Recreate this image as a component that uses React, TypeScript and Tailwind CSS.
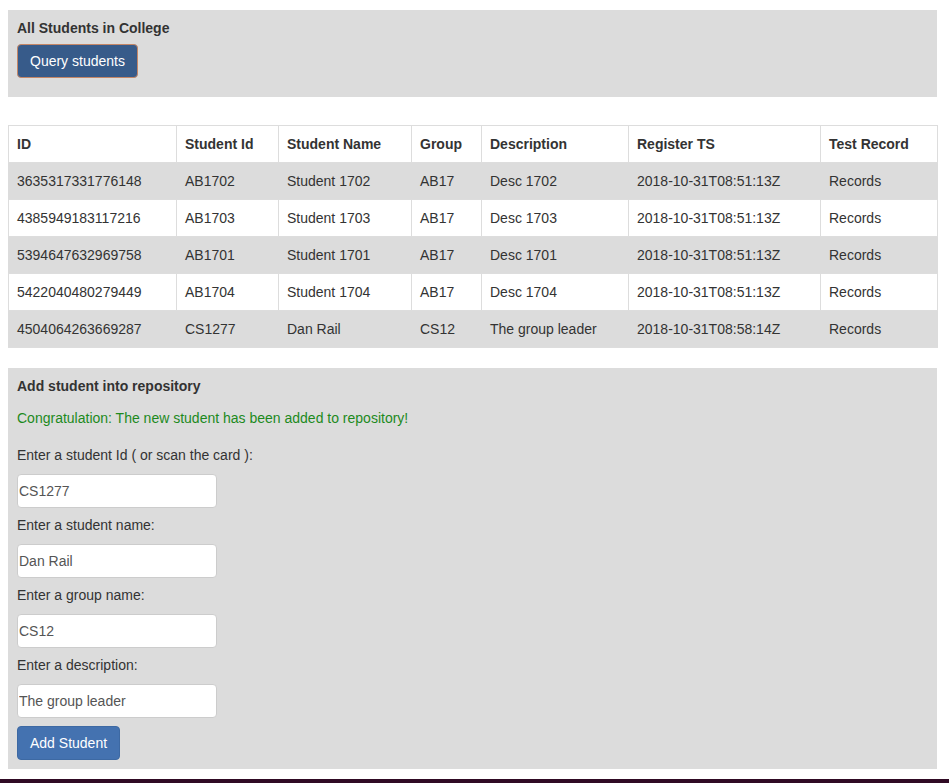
import React, { useState } from 'react';

type Student = {
  id: string;
  studentId: string;
  name: string;
  group: string;
  description: string;
  registerTs: string;
};

const students: Student[] = [
  { id: '3635317331776148', studentId: 'AB1702', name: 'Student 1702', group: 'AB17', description: 'Desc 1702', registerTs: '2018-10-31T08:51:13Z' },
  { id: '4385949183117216', studentId: 'AB1703', name: 'Student 1703', group: 'AB17', description: 'Desc 1703', registerTs: '2018-10-31T08:51:13Z' },
  { id: '5394647632969758', studentId: 'AB1701', name: 'Student 1701', group: 'AB17', description: 'Desc 1701', registerTs: '2018-10-31T08:51:13Z' },
  { id: '5422040480279449', studentId: 'AB1704', name: 'Student 1704', group: 'AB17', description: 'Desc 1704', registerTs: '2018-10-31T08:51:13Z' },
  { id: '4504064263669287', studentId: 'CS1277', name: 'Dan Rail', group: 'CS12', description: 'The group leader', registerTs: '2018-10-31T08:58:14Z' },
];

const headers = ['ID', 'Student Id', 'Student Name', 'Group', 'Description', 'Register TS', 'Test Record'];
const colWidths = ['w-[168px]', 'w-[102px]', 'w-[133px]', 'w-[70px]', 'w-[147px]', 'w-[192px]', 'w-[117px]'];

function Field({ label, value, onChange }: { label: string; value: string; onChange: (v: string) => void }) {
  return (
    <div className="flex flex-col">
      <label className="h-5 leading-5 mb-[9px]">{label}</label>
      <input
        type="text"
        value={value}
        onChange={(e) => onChange(e.target.value)}
        className="w-[200px] h-[34px] px-[1px] mb-[7px] bg-white border border-[#ccc] rounded-[4px] text-[#555] outline-none"
      />
    </div>
  );
}

export default function App() {
  const [studentId, setStudentId] = useState('CS1277');
  const [name, setName] = useState('Dan Rail');
  const [group, setGroup] = useState('CS12');
  const [desc, setDesc] = useState('The group leader');

  return (
    <div className="min-h-screen bg-white text-[14px] text-[#333] font-['Liberation_Sans',Arial,sans-serif] flex flex-col">
      <div className="px-2 pt-[10px] flex-1">
        {/* Query panel */}
        <div className="bg-[#dcdcdc] w-[929px] px-[9px] pt-2 pb-[19px]">
          <div className="font-bold h-5 leading-5 mb-[6px]">All Students in College</div>
          <button
            type="button"
            className="h-[34px] px-3 rounded-[4px] bg-[#375b8a] border border-[#c48666] text-white"
          >
            Query students
          </button>
        </div>

        {/* Students table */}
        <table className="mt-7 w-[929px] table-fixed border-collapse border border-[#ddd]">
          <thead>
            <tr className="h-[37px]">
              {headers.map((h, i) => (
                <th key={h} className={`${colWidths[i]} border border-[#ddd] px-2 text-left font-bold`}>
                  {h}
                </th>
              ))}
            </tr>
          </thead>
          <tbody>
            {students.map((s, i) => (
              <tr key={s.id} className={`h-[37px] ${i % 2 === 0 ? 'bg-[#dcdcdc]' : 'bg-white'}`}>
                {[s.id, s.studentId, s.name, s.group, s.description, s.registerTs, 'Records'].map((v, j) => (
                  <td key={j} className={`border border-[#ddd] px-2 ${i % 2 === 0 ? 'border-x-[#dcdcdc]' : ''}`}>
                    {v}
                  </td>
                ))}
              </tr>
            ))}
          </tbody>
        </table>

        {/* Add student panel */}
        <div className="mt-5 mb-[10px] bg-[#dcdcdc] w-[929px] px-[9px] pt-2 pb-[9px]">
          <div className="font-bold h-5 leading-5 mb-3">Add student into repository</div>
          <div className="text-[#1d8a1d] h-5 leading-5 mb-[17px]">
            Congratulation: The new student has been added to repository!
          </div>
          <Field label="Enter a student Id ( or scan the card ):" value={studentId} onChange={setStudentId} />
          <Field label="Enter a student name:" value={name} onChange={setName} />
          <Field label="Enter a group name:" value={group} onChange={setGroup} />
          <Field label="Enter a description:" value={desc} onChange={setDesc} />
          <button
            type="button"
            className="mt-[1px] h-[34px] px-3 rounded-[4px] bg-[#4472b0] border border-[#3d69a3] text-white"
          >
            Add Student
          </button>
        </div>
      </div>
      <div className="h-[5px] bg-[#300a24]" />
    </div>
  );
}
